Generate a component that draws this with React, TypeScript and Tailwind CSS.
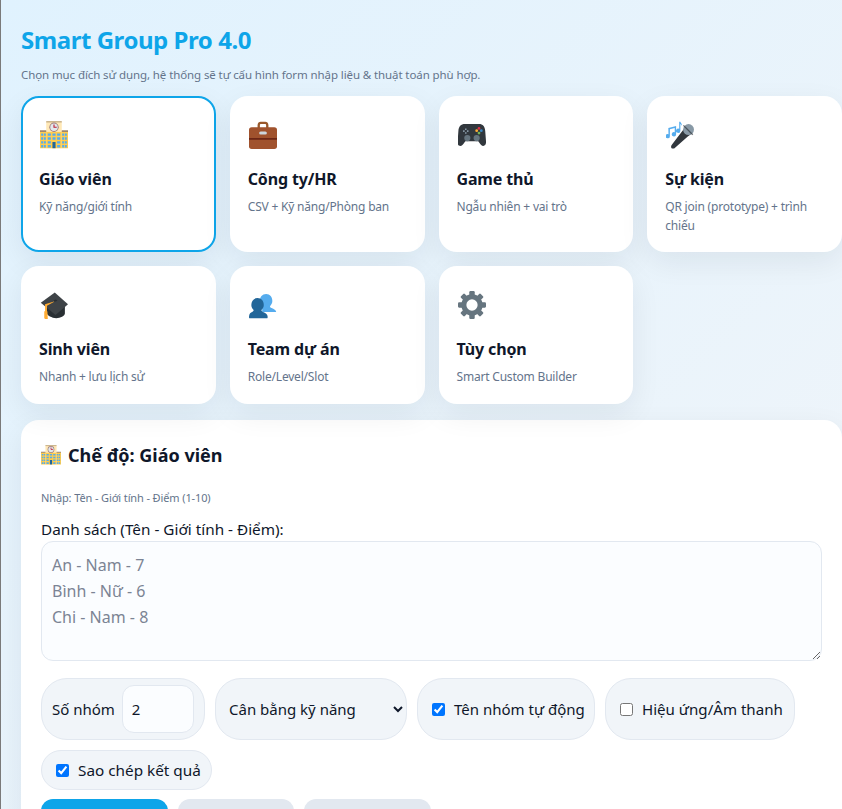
import React from 'react';

const font = "font-['Noto_Sans','Open_Sans',sans-serif]";

const SchoolIcon = ({ className = '' }: { className?: string }) => (
  <svg viewBox="0 0 36 36" className={className}>
    <path fill="#FFE8B6" d="M8 1h20v34H8z" />
    <path fill="#FFCC4D" d="M0 13h8v22H0zM28 13h8v22H28z" />
    <path fill="#FFCC4D" d="M8 14h20v21H8z" />
    <path fill="#A0876B" d="M0 12h8v2H0zM28 12h8v2H28z" />
    <path fill="#CCB68F" d="M8 0h20v2H8z" />
    <circle cx="18" cy="8" r="6" fill="#9C7B7B" />
    <circle cx="18" cy="8" r="4.800" fill="#E1E8ED" />
    <path fill="none" stroke="#BE1931" strokeWidth="1.400" d="M18 4.500V8h3.500" />
    <path fill="#55ACEE" d="M1.500 16h2.500v3H1.500zM5 16h2.500v3H5zM1.500 21h2.500v3H1.500zM5 21h2.500v3H5zM1.500 26h2.500v3H1.500zM5 26h2.500v3H5zM1.500 31h2.500v3H1.500zM5 31h2.500v3H5zM28.500 16h2.500v3h-2.500zM32 16h2.500v3H32zM28.500 21h2.500v3h-2.500zM32 21h2.500v3H32zM28.500 26h2.500v3h-2.500zM32 26h2.500v3H32zM28.500 31h2.500v3h-2.500zM32 31h2.500v3H32zM10 16h4v3h-4zM16 16h4v3h-4zM22 16h4v3h-4zM10 21h4v3h-4zM16 21h4v3h-4zM22 21h4v3h-4zM10 26h4v3h-4zM22 26h4v3h-4zM10 31h4v3h-4zM22 31h4v3h-4z" />
    <path fill="#226699" d="M16 27h4v8h-4z" />
  </svg>
);

const BriefcaseIcon = ({ className = '' }: { className?: string }) => (
  <svg viewBox="0 0 36 36" className={className}>
    <path fill="#99582A" d="M11 10V5.500C11 2.500 13 1 15 1h6c2 0 4 1.500 4 4.500V10h-3V5.500C22 4.500 21.500 4 20.500 4h-5c-1 0-1.500.5-1.500 1.500V10z" />
    <rect x="0" y="8" width="36" height="28" rx="3.500" fill="#A0522D" />
    <path fill="#662113" d="M0 22h36v2H0z" />
    <rect x="13" y="13.500" width="10" height="4" rx="2" fill="#CCD6DD" />
  </svg>
);

const GamepadIcon = ({ className = '' }: { className?: string }) => (
  <svg viewBox="0 0 36 36" className={className}>
    <path fill="#31373D" d="M9 4h18c5 0 7.500 3 8 9l1 13c.3 4-1 6-3.500 6-2 0-3.500-1.500-5-4l-1.500-2H9.500L8 28c-1.500 2.500-3 4-5 4-2.500 0-3.800-2-3.500-6l1-13c.5-6 3-9 8.500-9z" />
    <circle cx="12" cy="22" r="4" fill="#66757F" />
    <circle cx="24" cy="22" r="4" fill="#66757F" />
    <path fill="#8899A6" d="M9 9.500h2v2H9zM9 14.500h2v2H9zM6.500 12h2v2h-2zM11.500 12h2v2h-2z" />
    <circle cx="27" cy="9.500" r="1.800" fill="#DD2E44" />
    <circle cx="27" cy="15.500" r="1.800" fill="#77B255" />
    <circle cx="24" cy="12.500" r="1.800" fill="#FFAC33" />
    <circle cx="30" cy="12.500" r="1.800" fill="#3B88C3" />
  </svg>
);

const MicIcon = ({ className = '' }: { className?: string }) => (
  <svg viewBox="0 0 36 36" className={className}>
    <path fill="#31373D" d="M24 9l8 8-4 3L12 34c-1 1-2 1.500-3 1.500-1.500 0-2.500-1-2.500-2.500 0-1 .5-2 1.500-3L21 13z" />
    <circle cx="29" cy="11" r="7" fill="#8899A6" />
    <path fill="#31373D" d="M23 5l12 12-1.200 1.200-12-12z" opacity=".7" />
    <path fill="#55ACEE" d="M3 9l10-2.500V17a2.800 2.800 0 1 1-1.800-2.600V9L5 10.500V19.500a2.800 2.800 0 1 1-1.800-2.600z" />
    <path fill="#55ACEE" d="M17 1h1.500c.3 2 2.500 2.500 2 5.500-.4-1.300-1.200-2-2-2.500v8.500a2.800 2.800 0 1 1-1.500-2.500z" />
  </svg>
);

const GradCapIcon = ({ className = '' }: { className?: string }) => (
  <svg viewBox="0 0 36 36" className={className}>
    <path fill="#292F33" d="M9 18v11c0 2 6 6 12 6 5 0 11-3 11-6V18z" />
    <path fill="#3E4347" d="M19 2l17 15-16 14L1 15z" />
    <path fill="#FFAC33" d="M20 13L6.500 17V27h2.500V19z" />
    <path fill="#FFAC33" d="M5.500 26h4l.5 10H7c-1 0-1.500-1-1.500-2z" />
    <path fill="#292F33" d="M17.500 12l3-1 2 1.500-4 1.500z" />
  </svg>
);

const UsersIcon = ({ className = '' }: { className?: string }) => (
  <svg viewBox="0 0 36 36" className={className}>
    <path fill="#55ACEE" d="M35 27c0-2-3-4-6-5-1.500-.5-2-1.500-2-2.500 1.800-1.500 3-4 3-6.500 0-5-3-9-8-9s-8 4-8 9c0 2.500 1.200 5 3 6.500V27z" />
    <path fill="#269" d="M23 35c1 0 1-1 1-2 0-3-3-5-6-6-1.500-.5-2-1.500-2-2.500 1.800-1.500 3-4 3-6.500 0-5-3-9-8-9s-8 4-8 9c0 2.500 1.200 5 3 6.500 0 1-.5 2-2 2.500-1.500.5-4 2-4 6 0 1 0 2 1 2z" />
  </svg>
);

const GearIcon = ({ className = '' }: { className?: string }) => (
  <svg viewBox="0 0 36 36" className={className}>
    <circle cx="18" cy="18" r="10.500" fill="none" stroke="#66757F" strokeWidth="6.500" />
    {[0, 45, 90, 135, 180, 225, 270, 315].map(deg => (
      <rect key={deg} x="14.500" y="0" width="7" height="8" rx="1.500" fill="#66757F" transform={`rotate(${deg} 18 18)`} />
    ))}
  </svg>
);

const modes = [
  { title: 'Giáo viên', desc: 'Kỹ năng/giới tính', Icon: SchoolIcon, active: true },
  { title: 'Công ty/HR', desc: 'CSV + Kỹ năng/Phòng ban', Icon: BriefcaseIcon },
  { title: 'Game thủ', desc: 'Ngẫu nhiên + vai trò', Icon: GamepadIcon },
  { title: 'Sự kiện', desc: 'QR join (prototype) + trình chiếu', Icon: MicIcon },
  { title: 'Sinh viên', desc: 'Nhanh + lưu lịch sử', Icon: GradCapIcon },
  { title: 'Team dự án', desc: 'Role/Level/Slot', Icon: UsersIcon },
  { title: 'Tùy chọn', desc: 'Smart Custom Builder', Icon: GearIcon },
];

const pill = 'flex items-center rounded-[26px] border border-[#e2e8f0] bg-[#f1f5f9]';

const App: React.FC = () => {
  return (
    <div className={`${font} h-[809px] w-[842px] overflow-hidden border-l border-[#7a7a7a] bg-gradient-to-br from-[#e0f2fe] to-[#f1f5f9] pl-5 text-[#0f172a]`}>
      <h1 className="mt-[25px] text-2xl leading-[30px] font-bold tracking-[-0.45px] text-[#0ea5e9]">Smart Group Pro 4.0</h1>
      <p className="mt-3 text-[11.5px] leading-4 tracking-[-0.1px] text-[#64748b]">
        Chọn mục đích sử dụng, hệ thống sẽ tự cấu hình form nhập liệu &amp; thuật toán phù hợp.
      </p>

      {/* Mode cards */}
      <div className="mt-[13px] grid w-[823px] grid-cols-[194.75px_194.75px_194.75px_194.75px] gap-3.5">
        {modes.map(({ title, desc, Icon, active }) => (
          <div
            key={title}
            className={`rounded-[18px] border-2 bg-white px-4 pt-[23px] pb-[15px] shadow-[0_10px_30px_rgba(15,23,42,0.07)] ${
              active ? 'border-[#0ea5e9]' : 'border-transparent'
            }`}
          >
            <Icon className="ml-px h-7 w-7" />
            <h3 className="mt-5 text-base leading-5 font-bold tracking-[-0.15px]">{title}</h3>
            <p className="mt-[9px] text-xs leading-[18.7px] tracking-[-0.2px] text-[#64748b]">{desc}</p>
          </div>
        ))}
      </div>

      {/* Active mode panel */}
      <div className="mt-4 h-[500px] w-[821px] rounded-t-[18px] bg-white p-5 pt-[22px] shadow-[0_10px_30px_rgba(15,23,42,0.07)]">
        <h2 className="flex items-center gap-[7px] text-lg leading-[26px] font-bold">
          <SchoolIcon className="h-5 w-5" /> Chế độ: Giáo viên
        </h2>
        <p className="mt-[22px] text-[11px] leading-[15px] tracking-[-0.12px] text-[#64748b]">Nhập: Tên - Giới tính - Điểm (1-10)</p>
        <label className="mt-3.5 block text-[15.3px] leading-5">Danh sách (Tên - Giới tính - Điểm):</label>
        <textarea
          className="mt-0.5 block h-[120px] w-[781px] rounded-xl border border-[#e2e8f0] bg-[#fbfdff] px-2.5 py-2.5 text-base leading-[26px] placeholder:text-[#7b8494]"
          placeholder={'An - Nam - 7\nBình - Nữ - 6\nChi - Nam - 8'}
        />

        {/* Options */}
        <div className="mt-[17px] flex w-[781px] flex-wrap gap-2.5 text-[15px]">
          <div className={`${pill} h-[62px] w-[164px] pl-2.5`}>
            <span>Số nhóm</span>
            <input
              defaultValue="2"
              className="ml-[7px] h-[48px] w-[72px] rounded-xl border border-[#e2e8f0] bg-[#fbfdff] px-[9px]"
            />
          </div>
          <select className={`${pill} h-[62px] w-[192px] px-[9px]`} defaultValue="skill">
            <option value="skill">Cân bằng kỹ năng</option>
          </select>
          <label className={`${pill} h-[62px] w-[178px] gap-[9px] pl-[14px]`}>
            <input type="checkbox" defaultChecked className="h-[13px] w-[13px]" /> Tên nhóm tự động
          </label>
          <label className={`${pill} h-[62px] w-[190px] gap-[9px] pl-[14px] text-[15.1px]`}>
            <input type="checkbox" className="h-[13px] w-[13px]" /> Hiệu ứng/Âm thanh
          </label>
          <label className={`${pill} h-10 w-[171px] gap-[9px] pl-[14px] text-[15.3px]`}>
            <input type="checkbox" defaultChecked className="h-[13px] w-[13px]" /> Sao chép kết quả
          </label>
        </div>

        {/* Actions */}
        <div className="mt-[9px] flex gap-2.5 text-[15px] leading-5 font-bold">
          <button className="h-12 w-[127px] rounded-xl bg-[#0ea5e9] text-white">Chia nhóm</button>
          <button className="h-12 w-[116px] rounded-xl bg-[#e2e8f0]">Xuất file</button>
          <button className="h-12 w-[127px] rounded-xl bg-[#e2e8f0]">Sao chép</button>
        </div>
      </div>
    </div>
  );
};

export default App;
